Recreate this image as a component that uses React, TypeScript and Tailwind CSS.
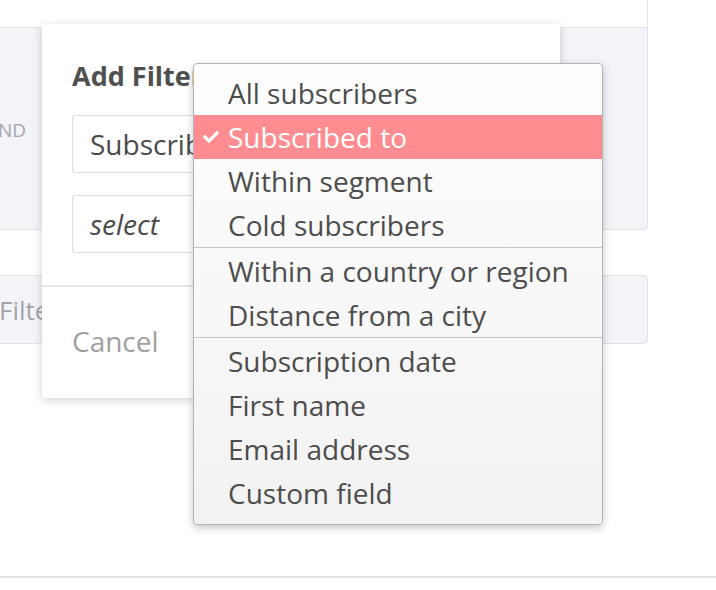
import React from "react";
import { FaCheck } from "react-icons/fa";

const groups: string[][] = [
  ["All subscribers", "Subscribed to", "Within segment", "Cold subscribers"],
  ["Within a country or region", "Distance from a city"],
  ["Subscription date", "First name", "Email address", "Custom field"],
];

export default function App() {
  return (
    <div className="relative w-[716px] h-[590px] bg-white overflow-hidden font-['Open_Sans',sans-serif] flex flex-col">
      {/* background page */}
      <div className="flex flex-col w-[708px] -ml-[60px]">
        <div className="h-[27px] border-r border-[#e1e2e6]" />
        <div className="h-[203px] bg-[#f3f4f8] border border-[#e1e2e6] rounded-br-[4px] flex items-center pl-[45px] pt-[4px]">
          <span className="text-[19px] text-[#a6a7ab]">AND</span>
        </div>
        <div className="h-[45px]" />
        <div className="h-[69px] bg-[#f3f4f8] border border-[#e1e2e6] rounded-r-[4px] flex items-center pl-[58px] pt-[2px]">
          <span className="text-[26px] text-[#a3a4a8]">Filter</span>
        </div>
      </div>
      <div className="mt-[232px] h-[2px] w-full bg-[#e3e4e8]" />

      {/* modal */}
      <div className="absolute left-[42px] top-[24px] w-[518px] h-[374px] bg-white rounded-[3px] shadow-[0_2px_10px_rgba(0,0,0,0.18)] flex flex-col">
        <div className="px-[30px] pt-[35px] flex flex-col">
          <div className="h-[34px] leading-[34px] text-[27px] font-bold text-[#4f4f4f]">Add Filter</div>
          <div className="mt-[22px] h-[58px] border border-[#dcdcdc] rounded-[3px] flex items-center pl-[17px] text-[28px] text-[#4a4a4a]">
            Subscribed to
          </div>
          <div className="mt-[22px] h-[58px] border border-[#dcdcdc] rounded-[3px] flex items-center pl-[17px] text-[28px] italic text-[#4a4a4a]">
            select
          </div>
        </div>
        <div className="mt-[32px] border-t-2 border-[#e6e6e6] flex-1 flex items-center px-[30px] pb-[4px]">
          <span className="text-[28px] text-[#a0a0a0]">Cancel</span>
        </div>
      </div>

      {/* dropdown menu */}
      <div className="absolute left-[193px] top-[63px] w-[410px] border border-[#b4b4b4] rounded-[4px] bg-gradient-to-b from-[#fefefe] to-[#f2f2f2] shadow-[0_3px_8px_rgba(0,0,0,0.22)] pt-[7px] pb-[9px]">
        {groups.map((g, gi) => (
          <div key={gi} className={gi > 0 ? "border-t border-[#c6c6c6]" : ""}>
            {gi > 0 ? <div className="h-px bg-[#fbfbfb]" /> : null}
            {g.map((item) => {
              const sel = item === "Subscribed to";
              return (
                <div
                  key={item}
                  className={
                    sel
                      ? "h-[44px] flex items-center bg-[#ff8c91] text-white text-[28px]"
                      : "h-[44px] flex items-center text-[#4d4d4d] text-[28px]"
                  }
                >
                  <span className="w-[34px] flex justify-center">
                    {sel ? <FaCheck className="w-[16px] h-[16px] text-white" /> : null}
                  </span>
                  <span>{item}</span>
                </div>
              );
            })}
          </div>
        ))}
      </div>
    </div>
  );
}
